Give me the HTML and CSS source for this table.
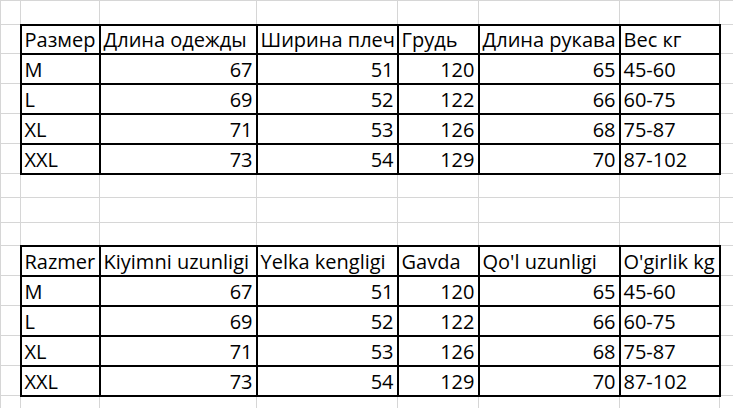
FILE: index.html
```html
<!DOCTYPE html>
<html lang="ru">
<head>
<meta charset="utf-8">
<title>Размеры</title>
<link rel="stylesheet" href="styles.css">
</head>
<body>
<table class="sheet">
  <colgroup>
    <col class="c0"><col class="c1"><col class="c2"><col class="c3"><col class="c4"><col class="c5"><col class="c6"><col class="c7">
  </colgroup>
  <tbody>
    <tr class="r-gap24"><td></td><td></td><td></td><td></td><td></td><td></td><td></td><td></td></tr>
    <tr class="r-29"><td></td><td class="b">Размер</td><td class="b">Длина одежды</td><td class="b">Ширина плеч</td><td class="b">Грудь</td><td class="b">Длина рукава</td><td class="b">Вес кг</td><td></td></tr>
    <tr class="r-30"><td></td><td class="b">M</td><td class="b n">67</td><td class="b n">51</td><td class="b n">120</td><td class="b n">65</td><td class="b">45-60</td><td></td></tr>
    <tr class="r-30"><td></td><td class="b">L</td><td class="b n">69</td><td class="b n">52</td><td class="b n">122</td><td class="b n">66</td><td class="b">60-75</td><td></td></tr>
    <tr class="r-30"><td></td><td class="b">XL</td><td class="b n">71</td><td class="b n">53</td><td class="b n">126</td><td class="b n">68</td><td class="b">75-87</td><td></td></tr>
    <tr class="r-30"><td></td><td class="b">XXL</td><td class="b n">73</td><td class="b n">54</td><td class="b n">129</td><td class="b n">70</td><td class="b">87-102</td><td></td></tr>
    <tr class="r-gap24"><td></td><td></td><td></td><td></td><td></td><td></td><td></td><td></td></tr>
    <tr class="r-gap25"><td></td><td></td><td></td><td></td><td></td><td></td><td></td><td></td></tr>
    <tr class="r-gap23"><td></td><td></td><td></td><td></td><td></td><td></td><td></td><td></td></tr>
    <tr class="r-30"><td></td><td class="b">Razmer</td><td class="b">Kiyimni uzunligi</td><td class="b">Yelka kengligi</td><td class="b">Gavda</td><td class="b">Qo'l uzunligi</td><td class="b">O'girlik kg</td><td></td></tr>
    <tr class="r-30"><td></td><td class="b">M</td><td class="b n">67</td><td class="b n">51</td><td class="b n">120</td><td class="b n">65</td><td class="b">45-60</td><td></td></tr>
    <tr class="r-30"><td></td><td class="b">L</td><td class="b n">69</td><td class="b n">52</td><td class="b n">122</td><td class="b n">66</td><td class="b">60-75</td><td></td></tr>
    <tr class="r-30"><td></td><td class="b">XL</td><td class="b n">71</td><td class="b n">53</td><td class="b n">126</td><td class="b n">68</td><td class="b">75-87</td><td></td></tr>
    <tr class="r-30"><td></td><td class="b">XXL</td><td class="b n">73</td><td class="b n">54</td><td class="b n">129</td><td class="b n">70</td><td class="b">87-102</td><td></td></tr>
    <tr class="r-gap24"><td></td><td></td><td></td><td></td><td></td><td></td><td></td><td></td></tr>
  </tbody>
</table>
</body>
</html>
```
FILE: styles.css
```css
html, body {
  margin: 0;
  padding: 0;
  background: #ffffff;
  overflow: hidden;
}

.sheet {
  border-collapse: collapse;
  table-layout: fixed;
  width: 760px;
  font-family: "Open Sans", "Noto Sans", sans-serif;
  font-size: 20px;
  color: #000000;
}

.c0 { width: 20px; }
.c1 { width: 79px; }
.c2 { width: 157px; }
.c3 { width: 141px; }
.c4 { width: 81px; }
.c5 { width: 141px; }
.c6 { width: 100px; }
.c7 { width: 41px; }

.sheet td {
  box-sizing: border-box;
  border: 1px solid #d6d6d6;
  padding: 0 3px 3px 3px;
  line-height: 20px;
  vertical-align: bottom;
  white-space: nowrap;
  overflow: hidden;
}

.sheet td.b {
  border: 2px solid #000000;
}

.sheet td.n {
  text-align: right;
}

.r-gap24 td { height: 24px; }
.r-gap25 td { height: 25px; }
.r-gap23 td { height: 23px; }
.r-29 td { height: 29px; }
.r-30 td { height: 30px; }
```
